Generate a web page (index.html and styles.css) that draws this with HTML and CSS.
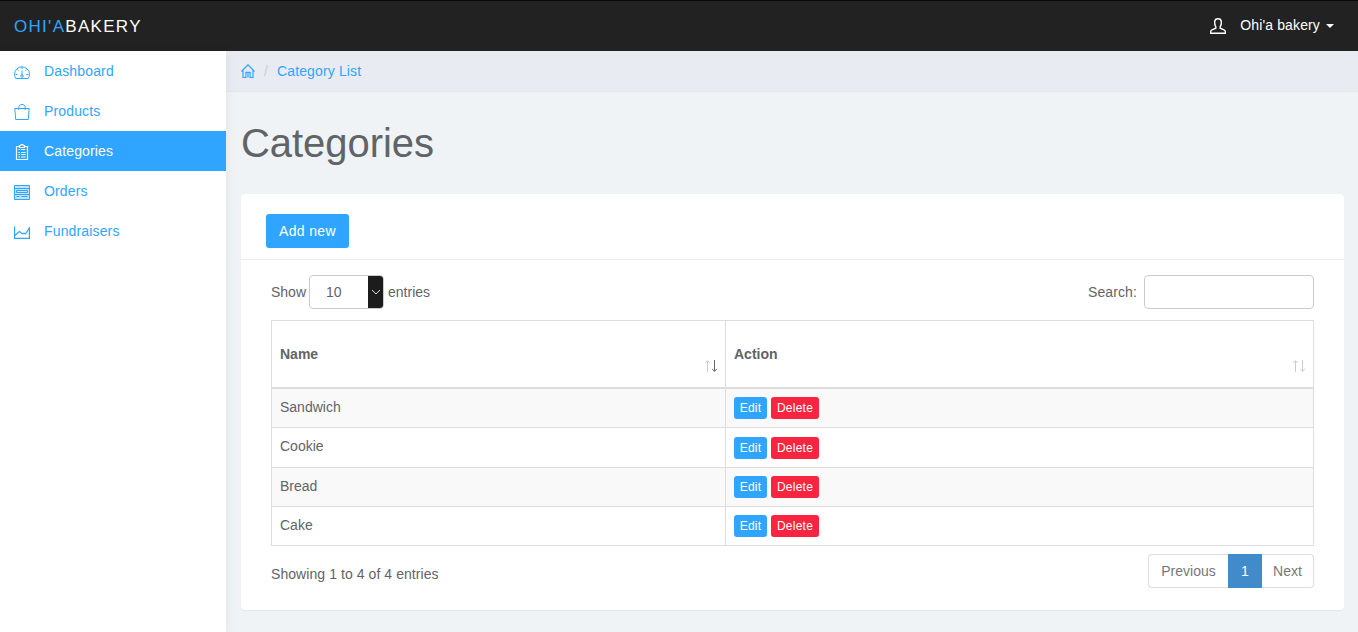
FILE: index.html
```html
<!DOCTYPE html>
<html lang="en">
<head>
<meta charset="utf-8">
<title>Categories</title>
<link rel="stylesheet" href="styles.css">
</head>
<body>
<header class="topbar">
  <a class="brand"><span class="brand-accent">OHI'A</span>BAKERY</a>
  <div class="user">
    <svg class="icon" viewBox="0 0 16 16"><path d="M5.800 10.200V8.700C4.700 7.500 4.500 5.500 4.700 3.500 4.900 1.600 6.200.7 8 .7s3.100.9 3.300 2.800c.2 2 0 4-1.100 5.200v1.500l3.800 1.600c1 .4 1.300.9 1.300 1.600v1.900H.7v-1.900c0-.7.3-1.200 1.300-1.600z"/></svg>
    <span class="user-name">Ohi'a bakery</span><span class="caret"></span>
  </div>
</header>
<div class="layout">
  <nav class="sidebar">
    <a class="nav-item"><svg class="icon" viewBox="0 0 16 16"><path d="M1.800 14.500C.9 13.200.5 11.800.5 10.300a7.500 7.500 0 0 1 15 0c0 1.500-.4 2.900-1.300 4.200zM8 3v2M3.300 5.500l1.200 1.200M12.700 5.500l-1.200 1.200M1.500 10.500h2M12.500 10.500h2M8 6.500v5"/><circle cx="8" cy="12" r="1.200"/></svg>Dashboard</a>
    <a class="nav-item"><svg class="icon" viewBox="0 0 16 16"><path d="M.8 4.500h14.400l-.9 11H1.700zM4.800 6V3.500C4.800 1.500 6 .5 8 .5s3.200 1 3.200 3V6"/></svg>Products</a>
    <a class="nav-item active"><svg class="icon bold" viewBox="0 0 16 16"><path d="M5.500 2.500h-3v13h11v-13h-3M5.500 1.500h1.200c0-.6.5-1 1.300-1s1.300.4 1.300 1h1.200v2h-5zM4.500 5.500h1.500M7 5.500h4.500M4.500 8.500h1.500M7 8.500h4.500M4.500 10.500h1.500M7 10.500h4.500M4.500 13h1.500M7 13h4.500"/></svg>Categories</a>
    <a class="nav-item"><svg class="icon" viewBox="0 0 16 16"><path class="tint" d="M.5 1.500h15v14H.5z"/><path d="M.5 1.500h15v14H.5zM.5 4.500h15M2.500 6.500h11v2h-11zM.5 10.500h15M2.500 12.500h3M7.500 12.500h6"/></svg>Orders</a>
    <a class="nav-item"><svg class="icon" viewBox="0 0 16 16"><path class="line" d="M.6 2.500v11.800h14.800V3M.8 11.500l4.700-4 3 2.300 1.500-.6 1.500.8L15.300 4"/></svg>Fundraisers</a>
  </nav>
  <main class="content">
    <div class="breadcrumb">
      <svg class="home" viewBox="0 0 14 14"><path d="M.5 7.500 7 .8l6.500 6.700M2 6.200v7.300h2.900V8.300h4.200v5.200H12V6.200M7 9v4.500"/></svg>
      <span class="slash">/</span>
      <a>Category List</a>
    </div>
    <h1 class="title">Categories</h1>
    <section class="card">
      <div class="card-head"><button class="btn">Add new</button></div>
      <div class="card-body">
        <div class="controls">
          <div class="length">Show
            <div class="select"><span class="select-value">10</span><span class="select-arrow"><svg width="10" height="6" viewBox="0 0 10 6"><path d="M1 1l4 4 4-4"/></svg></span></div>
            entries</div>
          <label class="search">Search:<input class="search-input" type="text"></label>
        </div>
        <table class="grid">
          <colgroup><col class="col-name"><col></colgroup>
          <thead><tr>
            <th><div class="th"><span>Name</span><svg class="sort" viewBox="0 0 14 12"><path d="M3.500 12V.8M1.200 3l2.300-2.300L5.800 3"/><path class="on" d="M10.500 0v11.200M8.200 9l2.300 2.300L12.800 9"/></svg></div></th>
            <th><div class="th"><span>Action</span><svg class="sort" viewBox="0 0 14 12"><path d="M3.500 12V.8M1.200 3l2.300-2.300L5.800 3"/><path d="M10.500 0v11.200M8.200 9l2.300 2.300L12.800 9"/></svg></div></th>
          </tr></thead>
          <tbody>
            <tr class="odd"><td>Sandwich</td><td><div class="actions"><button class="btn-xs">Edit</button><button class="btn-xs danger">Delete</button></div></td></tr>
            <tr class="tall"><td>Cookie</td><td><div class="actions"><button class="btn-xs">Edit</button><button class="btn-xs danger">Delete</button></div></td></tr>
            <tr class="odd"><td>Bread</td><td><div class="actions"><button class="btn-xs">Edit</button><button class="btn-xs danger">Delete</button></div></td></tr>
            <tr><td>Cake</td><td><div class="actions"><button class="btn-xs">Edit</button><button class="btn-xs danger">Delete</button></div></td></tr>
          </tbody>
        </table>
        <div class="footer">
          <div class="info">Showing 1 to 4 of 4 entries</div>
          <div class="pager"><a class="prev">Previous</a><a class="current">1</a><a class="next">Next</a></div>
        </div>
      </div>
    </section>
  </main>
</div>
</body>
</html>
```
FILE: styles.css
```css
* { box-sizing: border-box; }
body {
  margin: 0;
  height: 632px;
  overflow: hidden;
  font: 14px/20px "Liberation Sans", Arial, sans-serif;
  color: #5f6468;
  background: #eff3f6;
}
button, input { font-family: inherit; }
svg { fill: none; stroke: currentColor; }

.topbar {
  height: 51px;
  padding: 0 24px 0 14px;
  display: flex;
  align-items: center;
  justify-content: space-between;
  background: #222;
  border-top: 1px solid #080808;
  color: #fff;
}
.brand { font-size: 17px; letter-spacing: 1.3px; padding-top: 2px; }
.brand-accent { color: #30a5ff; }
.user { display: flex; align-items: center; }
.user-name { margin: -2px 6px 0 14px; letter-spacing: .13px; }
.caret { border: 4px solid transparent; border-top-color: #fff; border-bottom: 0; }
.icon { width: 16px; height: 16px; stroke-width: 1; flex: none; }
.user .icon { stroke-width: 1.4; }

.layout { display: flex; height: 581px; }
.sidebar { width: 226px; flex: none; background: #fff; box-shadow: 1px 0 10px rgba(0, 0, 0, .05); z-index: 1; }
.nav-item {
  height: 40px;
  padding: 0 14px;
  display: flex;
  align-items: center;
  gap: 14px;
  color: #30a5ff;
  letter-spacing: .15px;
}
.nav-item .icon { margin-top: 2px; }
.nav-item .bold { stroke-width: 1.2; }
.nav-item.active { background: #30a5ff; color: #fff; }
.tint { fill: currentColor; fill-opacity: .3; stroke: none; }
.line { stroke-width: 1.2; }

.content { flex: 1; }
.breadcrumb {
  height: 41px;
  padding: 0 15px;
  display: flex;
  align-items: center;
  background: #e9ebf3;
  border-bottom: 1px solid #e4e8ee;
  color: #30a5ff;
  letter-spacing: .13px;
}
.home { width: 14px; height: 14px; margin-top: -1px; stroke-width: 1.2; }
.slash { color: #ccc; margin: 0 9px; }
.title { margin: 29px 15px 28px; font-size: 40px; line-height: 45px; font-weight: 400; letter-spacing: -.05px; }

.card {
  width: 1103px;
  height: 416px;
  margin-left: 15px;
  background: #fff;
  border-radius: 4px;
  box-shadow: 0 1px 1px rgba(0, 0, 0, .05);
}
.card-head { height: 66px; padding: 20px 25px 0; border-bottom: 1px solid #e9ecf2; }
.btn {
  display: block;
  width: 83px;
  height: 34px;
  padding: 0;
  border: 0;
  border-radius: 3px;
  background: #30a5ff;
  color: #fff;
  font-size: 14px;
  letter-spacing: .35px;
}
.card-body { padding: 15px 30px; }
.controls { display: flex; justify-content: space-between; }
.length, .search { display: flex; align-items: center; height: 34px; }
.length { gap: 4px; }
.select {
  width: 75px;
  height: 34px;
  margin-left: -1px;
  display: flex;
  border: 1px solid #ccc;
  border-radius: 4px;
  overflow: hidden;
}
.select-value { flex: 1; padding-left: 16px; line-height: 33px; }
.select-arrow { width: 15px; display: flex; align-items: center; justify-content: center; background: #1c1c1c; color: #ddd; }
.search { gap: 7px; letter-spacing: .1px; }
.search-input { width: 170px; height: 34px; border: 1px solid #ccc; border-radius: 4px; }

.grid {
  width: 1043px;
  margin-top: 11px;
  table-layout: fixed;
  border-collapse: separate;
  border-spacing: 0;
  border: solid #ddd;
  border-width: 1px 0 0 1px;
}
.col-name { width: 454px; }
.grid th, .grid td { padding: 0 8px; border: solid #ddd; border-width: 0 1px 1px 0; text-align: left; }
.grid th { height: 68px; padding: 0 7px 0 8px; border-bottom-width: 2px; }
.th { display: flex; justify-content: space-between; align-items: center; height: 20px; }
.sort { width: 14px; height: 12px; margin-top: 24px; flex: none; color: #ccc; }
.sort .on { stroke: #666; }
.grid td { height: 39px; line-height: 20px; padding-bottom: 2px; }
.grid td + td { padding-bottom: 0; }
.tall td { height: 40px; padding-bottom: 3px; }
.tall td + td { padding-top: 1px; }
.odd { background: #f9f9f9; }
.actions { display: flex; gap: 4px; }
.btn-xs {
  width: 33px;
  height: 22px;
  padding: 0;
  border: 0;
  border-radius: 3px;
  background: #30a5ff;
  color: #fff;
  font-size: 12px;
  letter-spacing: .25px;
}
.btn-xs.danger { width: 48px; background: #f9243f; }

.footer { display: flex; justify-content: space-between; margin-top: 8px; }
.info { padding-top: 10px; letter-spacing: .07px; }
.pager { display: flex; height: 34px; line-height: 32px; text-align: center; color: #777; }
.pager a { border: 1px solid #ddd; }
.pager .prev { width: 80px; border-right: 0; border-radius: 4px 0 0 4px; }
.pager .current { width: 34px; background: #428bca; border-color: #428bca; color: #fff; }
.pager .next { width: 52px; border-left: 0; border-radius: 0 4px 4px 0; }
```
